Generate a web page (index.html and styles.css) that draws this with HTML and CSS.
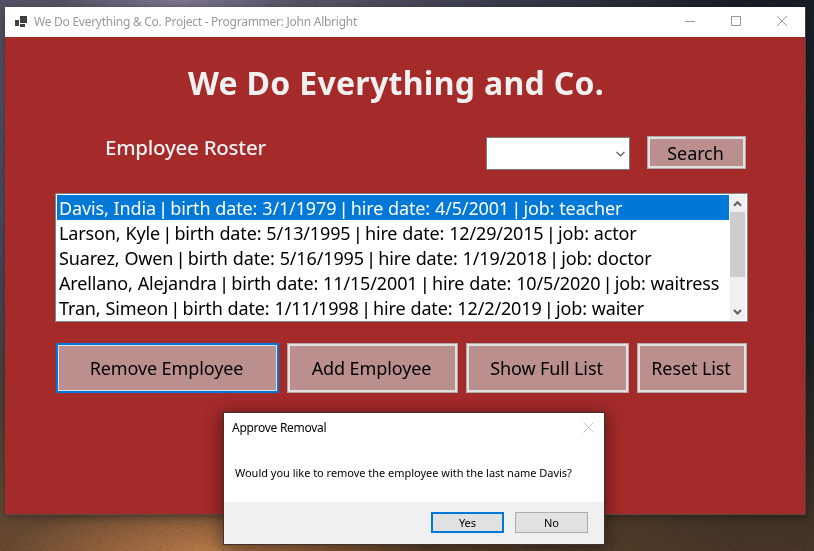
FILE: index.html
```html
<!DOCTYPE html>
<html lang="en">
<head>
<meta charset="utf-8">
<title>We Do Everything &amp; Co. Project</title>
<link rel="stylesheet" href="styles.css">
</head>
<body>
<div class="desktop">
  <svg class="grain" width="814" height="551" aria-hidden="true">
    <filter id="grain"><feTurbulence type="fractalNoise" baseFrequency="0.7" numOctaves="2" seed="4"/><feColorMatrix values=".6 .3 .1 0 0 .6 .3 .1 0 0 .6 .3 .1 0 0 0 0 0 0 1"/></filter>
    <rect width="814" height="551" filter="url(#grain)"/>
  </svg>
  <main class="window">
    <header class="titlebar">
      <svg class="app-icon" width="12" height="11" viewBox="0 0 12 11"><path fill="#404040" d="M5 0h7v7H5zM0 4h4v6H0zM5 8h5v3H5z"/></svg>
      <span class="window-title">We Do Everything &amp; Co. Project - Programmer: John Albright</span>
      <div class="controls">
        <svg width="10" height="10" viewBox="0 0 10 10"><path d="M0 5.5h10"/></svg>
        <svg width="10" height="10" viewBox="0 0 10 10"><path d="M.5.5h9v9h-9z"/></svg>
        <svg width="10" height="10" viewBox="0 0 10 10"><path d="M0 0l10 10M10 0L0 10"/></svg>
      </div>
    </header>
    <section class="client">
      <h1><span>We Do Everything and Co.</span></h1>
      <div class="toolbar">
        <h2><span>Employee Roster</span></h2>
        <div class="combo"><svg width="9" height="6" viewBox="0 0 9 6"><path d="M.5.8l4 4 4-4"/></svg></div>
        <button class="btn search"><span>Search</span></button>
      </div>
      <div class="listbox">
        <ul>
          <li class="selected"><span>Davis, India <i>|</i> birth date: 3/1/1979 <i>|</i> hire date: 4/5/2001 <i>|</i> job: teacher</span></li>
          <li><span>Larson, Kyle <i>|</i> birth date: 5/13/1995 <i>|</i> hire date: 12/29/2015 <i>|</i> job: actor</span></li>
          <li><span>Suarez, Owen <i>|</i> birth date: 5/16/1995 <i>|</i> hire date: 1/19/2018 <i>|</i> job: doctor</span></li>
          <li><span>Arellano, Alejandra <i>|</i> birth date: 11/15/2001 <i>|</i> hire date: 10/5/2020 <i>|</i> job: waitress</span></li>
          <li><span>Tran, Simeon <i>|</i> birth date: 1/11/1998 <i>|</i> hire date: 12/2/2019 <i>|</i> job: waiter</span></li>
        </ul>
        <div class="scrollbar">
          <svg width="15" height="17" viewBox="0 0 15 17"><path d="M4 10.7l3.5-3.5 3.5 3.5"/></svg>
          <div class="thumb"></div>
          <svg class="down" width="15" height="17" viewBox="0 0 15 17"><path d="M4 7l3.5 3.5L11 7"/></svg>
        </div>
      </div>
      <div class="actions">
        <button class="btn remove focused"><span>Remove Employee</span></button>
        <button class="btn add"><span>Add Employee</span></button>
        <button class="btn show"><span>Show Full List</span></button>
        <button class="btn reset"><span>Reset List</span></button>
      </div>
    </section>
  </main>
  <div class="dialog" role="dialog">
    <div class="dialog-head">
      <span class="dialog-title">Approve Removal</span>
      <svg width="11" height="11" viewBox="0 0 11 11"><path d="M.5.5l10 10M10.5.5l-10 10"/></svg>
    </div>
    <p><span>Would you like to remove the employee with the last name Davis?</span></p>
    <footer>
      <button class="small default"><span>Yes</span></button>
      <button class="small"><span>No</span></button>
    </footer>
  </div>
</div>
</body>
</html>
```
FILE: styles.css
```css
* { box-sizing: border-box; }
body { margin: 0; font-family: "Noto Sans", "Open Sans", sans-serif; }
h1, h2, p, ul { margin: 0; padding: 0; }
button { font: inherit; padding: 0; margin: 0; border-radius: 0; }
span { white-space: nowrap; }
svg { display: block; flex: none; }

.desktop {
  position: relative;
  width: 814px;
  height: 551px;
  padding: 7px 8px 36px 5px;
  overflow: hidden;
  background:
    radial-gradient(ellipse 210px 50px at 215px 551px, #a5683e, transparent),
    radial-gradient(ellipse 120px 30px at 180px 0, #6c657a, transparent),
    linear-gradient(transparent 55%, rgba(85, 58, 34, .6) 100%),
    linear-gradient(90deg, transparent 40%, rgba(12, 18, 24, .85) 90%),
    linear-gradient(#474656 0, #3e3d4c 45%, #3b3534 75%, #5b4330 100%);
}
.grain { position: absolute; inset: 0; opacity: .35; mix-blend-mode: overlay; }

.window {
  position: relative;
  width: 801px;
  height: 508px;
  background: #a52a2a;
  border-right: 1px solid #464242;
  border-bottom: 1px solid #5a4d48;
  box-shadow: 0 2px 8px rgba(0, 0, 0, .35);
}
.titlebar {
  display: flex;
  align-items: center;
  height: 30px;
  padding: 0 18px 2px 10px;
  background: #fff;
}
.window-title { margin-left: 7px; font-size: 12px; color: #999; letter-spacing: -.26px; }
.controls { display: flex; gap: 36px; margin-left: auto; }
.controls path { fill: none; stroke: #999; }

.client { padding: 23px 0 0 50px; }
h1 { width: 682px; height: 46px; line-height: 46px; text-align: center; font-size: 32px; letter-spacing: .3px; color: #f0f0f0; }
.toolbar { display: flex; height: 50px; margin-top: 30px; }
h2 { width: 381px; padding-left: 50px; line-height: 22px; font-size: 20.5px; font-weight: 500; letter-spacing: -.25px; color: #f0f0f0; }
.combo {
  display: flex;
  align-items: center;
  justify-content: flex-end;
  width: 144px;
  height: 33px;
  margin: 1px 17px 0 50px;
  padding-right: 4px;
  border: 1px solid #7a7a7a;
  background: #fff;
}
.combo path { fill: none; stroke: #505050; stroke-width: 1.2; }
.btn {
  padding-right: 2px;
  border: 1px solid #adadad;
  background: #bc8f8f;
  box-shadow: inset 0 0 0 2px #e1e1e1;
  color: #000;
  font-size: 18px;
  letter-spacing: -.1px;
}
.btn.focused { border: 2px solid #0078d7; box-shadow: inset 0 0 0 1px #e1e1e1; }
.search { width: 99px; height: 33px; padding-top: 2px; line-height: 29px; }

.listbox {
  display: flex;
  width: 693px;
  height: 129px;
  margin-top: 7px;
  padding: 1px;
  border: 1px solid #828790;
  background: #fff;
}
ul { width: 672px; list-style: none; font-size: 18px; letter-spacing: -.14px; word-spacing: .4px; }
li { height: 25px; padding-left: 2px; line-height: 26px; color: #000; }
/* Separator bars use a face in which the glyph is narrow. */
li i { font-family: "Liberation Sans", sans-serif; font-style: normal; line-height: 1; }
.selected { background: #0078d7; color: #fff; }
.scrollbar { display: flex; flex-direction: column; width: 16px; margin-left: 1px; background: #f0f0f0; }
.scrollbar path { fill: none; stroke: #606060; stroke-width: 2; }
.thumb { width: 15px; height: 65px; background: #cdcdcd; }
.down { margin-top: auto; }

.actions { display: flex; gap: 8px; margin: 21px 0 0 1px; }
.actions .btn { height: 50px; }
.remove { width: 223px; }
.add { width: 171px; }
.show { width: 163px; }
.reset { width: 110px; }

.dialog {
  position: absolute;
  left: 223px;
  top: 412px;
  width: 382px;
  height: 133px;
  border: 1px solid #40302e;
  background: #fff;
  box-shadow: 0 3px 16px 2px rgba(0, 0, 0, .42);
  color: #000;
}
.dialog-head { display: flex; justify-content: space-between; height: 46px; padding: 8px 10px 0 8px; font-size: 12px; letter-spacing: -.28px; line-height: 14px; }
.dialog-head svg { margin-top: 1px; }
.dialog-head path { stroke: #c4c4c4; }
.dialog p { height: 43px; padding-left: 11px; line-height: 28px; font-size: 11px; }
.dialog p span { letter-spacing: -.02px; }
footer { display: flex; justify-content: flex-end; gap: 11px; height: 42px; padding: 10px 16px 0 0; background: #f0f0f0; }
.small { width: 73px; height: 21px; line-height: 17px; border: 1px solid #adadad; background: #e1e1e1; color: #000; font-size: 11px; }
.small.default { border: 2px solid #0078d7; }
```
